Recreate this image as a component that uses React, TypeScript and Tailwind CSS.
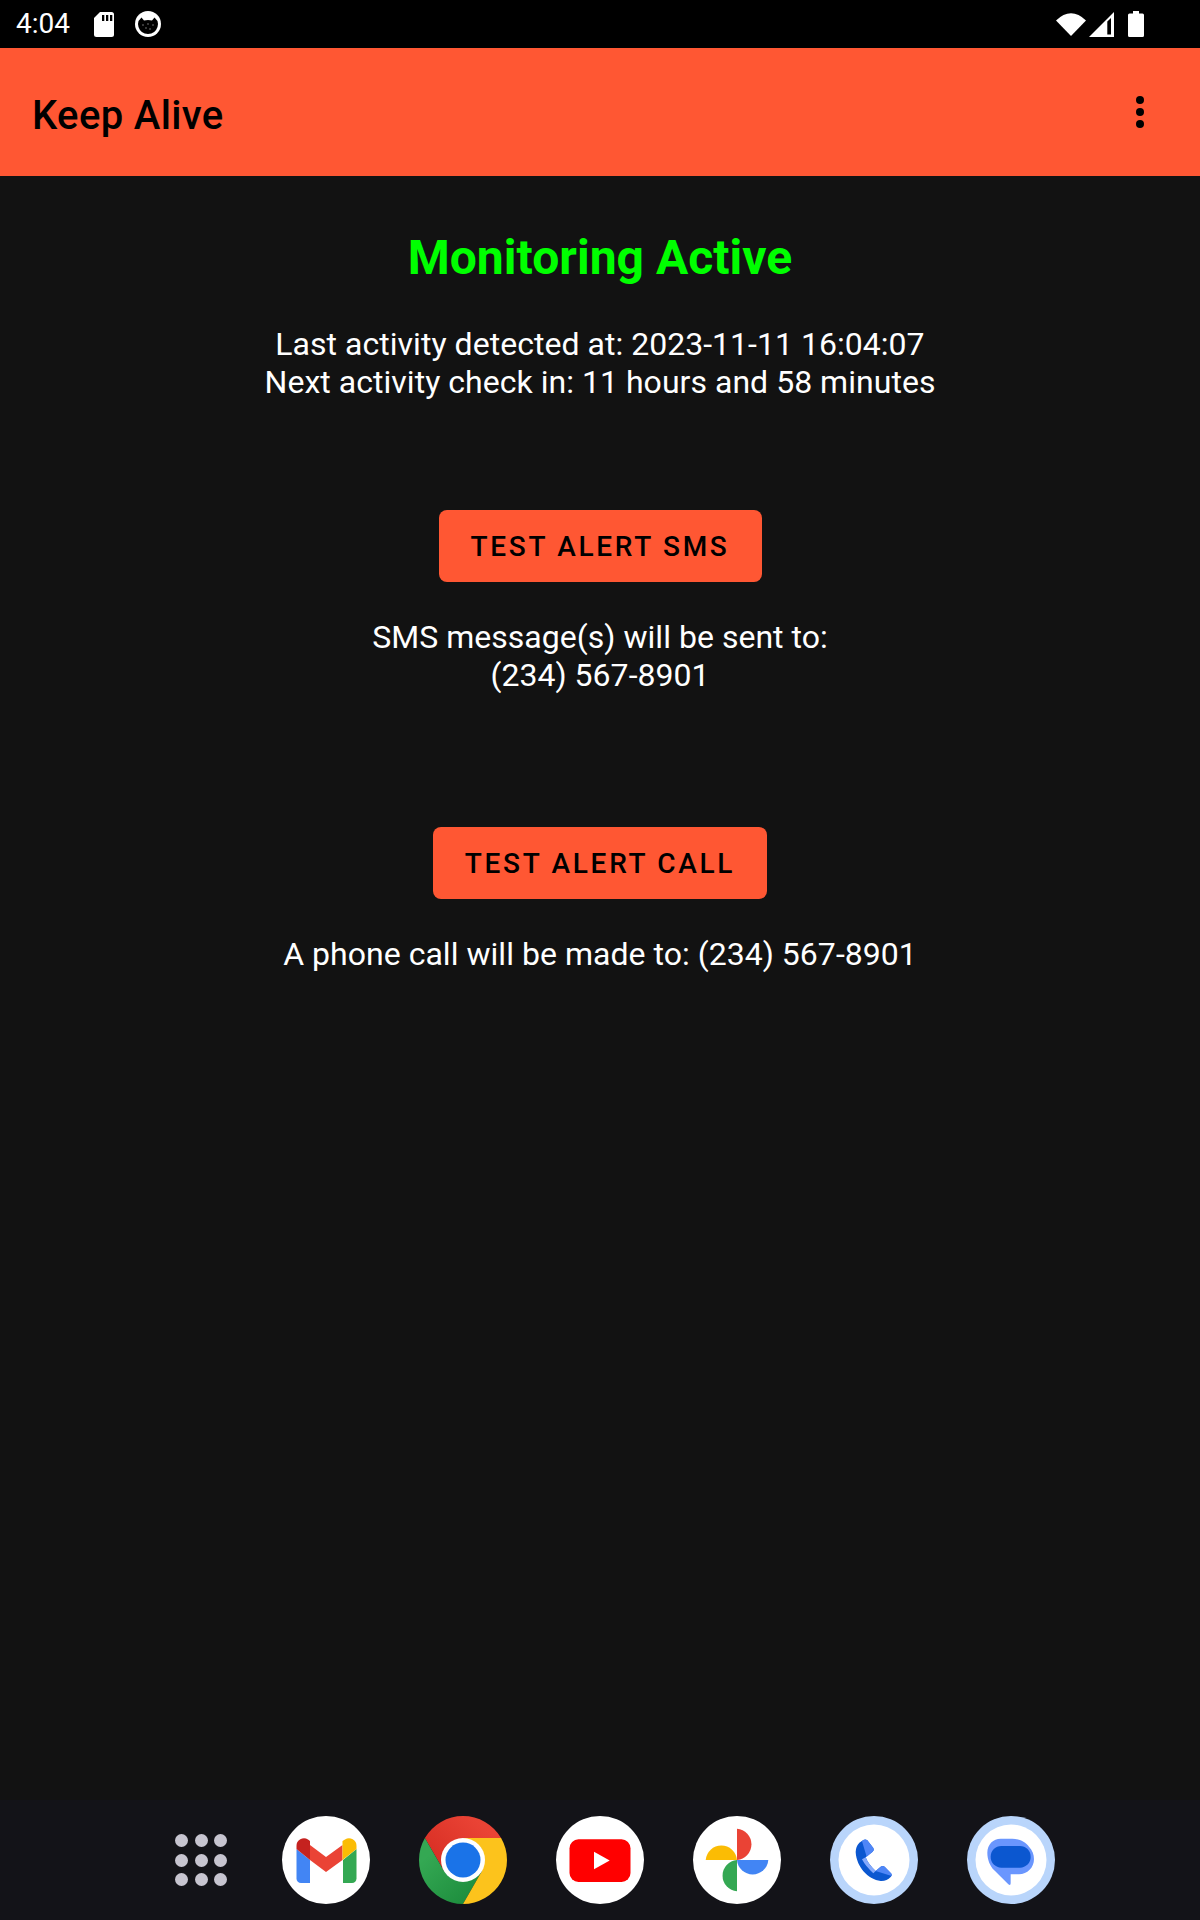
const dots = [0, 1, 2, 3, 4, 5, 6, 7, 8];

function StatusBar() {
  return (
    <div className="h-12 bg-black flex items-center shrink-0 pl-4 pr-[56px] text-white">
      <span className="text-[28px] leading-none w-[78px]">4:04</span>
      <svg width="20" height="25" viewBox="0 0 20 25" className="mr-[21px]">
        <path d="M6 0H17.5A2.5 2.5 0 0 1 20 2.5V22.5A2.5 2.5 0 0 1 17.5 25H2.5A2.5 2.5 0 0 1 0 22.5V6Z" fill="#fff" />
        <rect x="8" y="3" width="2.3" height="6" fill="#000" />
        <rect x="12" y="3" width="2.3" height="6" fill="#000" />
        <rect x="16" y="3" width="2.3" height="6" fill="#000" />
      </svg>
      <svg width="26" height="26" viewBox="0 0 26 26">
        <circle cx="13" cy="13" r="13" fill="#fff" />
        <path d="M3.5 10L6.5 6.5L9 9.5Q13 8.3 17 9.5L19.5 6.5L22.5 10Q23.5 13 22.5 16A10 10 0 0 1 3.5 16Q2.5 13 3.5 10Z" fill="#000" />
        <circle cx="8" cy="14" r="0.7" fill="#999" />
        <circle cx="11" cy="17" r="0.7" fill="#999" />
        <circle cx="18" cy="14" r="0.7" fill="#999" />
        <circle cx="15" cy="18" r="0.7" fill="#999" />
        <circle cx="13" cy="13" r="0.7" fill="#999" />
      </svg>
      <div className="flex-1" />
      <svg width="30" height="24" viewBox="0 0 30 24" className="mr-[3px]">
        <path d="M0 8.5Q15 -6 30 8.5L15 24Z" fill="#fff" />
      </svg>
      <svg width="25" height="25" viewBox="0 0 25 25" className="mr-[14px]">
        <path d="M25 0V25H0Z" fill="#fff" />
        <path d="M18.3 9.5L22 6V22.5H18.3Z" fill="#000" />
      </svg>
      <svg width="16" height="26" viewBox="0 0 16 26">
        <path d="M5 0H11V2.5H14.5A1.5 1.5 0 0 1 16 4V24.5A1.5 1.5 0 0 1 14.5 26H1.5A1.5 1.5 0 0 1 0 24.5V4A1.5 1.5 0 0 1 1.5 2.5H5Z" fill="#fff" />
      </svg>
    </div>
  );
}

function Toolbar() {
  return (
    <div className="h-32 bg-[#ff5733] flex items-center justify-between shrink-0 pl-8 pr-[56px]">
      <span className="mt-[7px] text-[40px] font-medium tracking-[0.35px] text-black leading-none">Keep Alive</span>
      <div className="flex flex-col gap-1">
        <span className="w-2 h-2 rounded-full bg-black" />
        <span className="w-2 h-2 rounded-full bg-black" />
        <span className="w-2 h-2 rounded-full bg-black" />
      </div>
    </div>
  );
}

function Dock() {
  return (
    <div className="h-[120px] bg-[#131318] flex items-center shrink-0 pl-[175px] gap-[49px]">
      <div className="grid grid-cols-[13px_13px_13px] gap-[6.5px] mr-[6px]">
        {dots.map((d) => (
          <span key={d} className="w-[13px] h-[13px] rounded-full bg-[#c7c5d0]" />
        ))}
      </div>
      {/* gmail */}
      <svg width="88" height="88" viewBox="0 0 88 88">
        <circle cx="44" cy="44" r="44" fill="#fff" />
        <path d="M14.5 33V62.5A4.5 4.5 0 0 0 19 67H28V44Z" fill="#4285f4" />
        <path d="M74.5 33V62.5A4.5 4.5 0 0 1 70 67H61V44Z" fill="#34a853" />
        <path d="M28 29L44 41L60.5 29V44L44 56L28 44Z" fill="#ea4335" />
        <path d="M14.5 33V30A7.5 7.5 0 0 1 26 23.5L28 25V44Z" fill="#c5221f" />
        <path d="M74.5 33V30A7.5 7.5 0 0 0 63 23.5L60.5 25V44Z" fill="#fbbc04" />
      </svg>
      {/* chrome */}
      <svg width="88" height="88" viewBox="0 0 88 88">
        <defs>
          <linearGradient id="chromeRed" x1="0" y1="0.6" x2="0.7" y2="0.1">
            <stop offset="0" stopColor="#d93025" />
            <stop offset="1" stopColor="#ea4335" />
          </linearGradient>
          <linearGradient id="chromeGreen" x1="0.7" y1="1" x2="0.1" y2="0.3">
            <stop offset="0" stopColor="#1e8e3e" />
            <stop offset="1" stopColor="#34a853" />
          </linearGradient>
        </defs>
        <path d="M5.9 22A44 44 0 0 1 82.1 22L44 22L25 55Z" fill="url(#chromeRed)" />
        <path d="M5.9 22A44 44 0 0 0 44 88L63 55L44 66L25 55Z" fill="url(#chromeGreen)" />
        <path d="M82.1 22A44 44 0 0 1 44 88L63 55L63 33L44 22Z" fill="#fcc31c" />
        <circle cx="44" cy="44" r="22" fill="#fff" />
        <circle cx="44" cy="44" r="17.5" fill="#1a73e8" />
      </svg>
      {/* youtube */}
      <svg width="88" height="88" viewBox="0 0 88 88">
        <circle cx="44" cy="44" r="44" fill="#fff" />
        <rect x="13.5" y="23.3" width="61" height="42.6" rx="9" fill="#ff0000" />
        <path d="M38 35.7L53.7 44.5L38 53.3Z" fill="#fff" />
      </svg>
      {/* photos */}
      <svg width="88" height="88" viewBox="0 0 88 88">
        <circle cx="44" cy="44" r="44" fill="#fff" />
        <path d="M44 12.7A15.7 15.7 0 0 1 44 44Z" fill="#ea4335" />
        <path d="M12.7 44A15.7 15.7 0 0 1 44 44Z" fill="#fbbc04" />
        <path d="M44 44H75.3A15.7 15.7 0 0 1 44 44Z" fill="#4285f4" />
        <path d="M44 44V75.3A15.7 15.7 0 0 1 44 44Z" fill="#34a853" />
      </svg>
      {/* phone */}
      <svg width="88" height="88" viewBox="0 0 88 88">
        <circle cx="44" cy="44" r="44" fill="#b9d5fb" />
        <circle cx="44" cy="44" r="35.5" fill="#fff" />
        <g transform="translate(10 10) scale(0.3333)">
          <path d="M70 42Q76 38 82 43L100 66Q104 72 98 77L77 94Q85 115 107 135L122 122Q128 118 134 122L153 142Q158 148 152 153Q140 166 122 165C85 160 50 125 47 78Q47 62 58 50Z" fill="#0b57d0" />
          <path d="M70 42Q76 38 82 43L100 66Q104 72 98 77L80 92L66 46Z" fill="#4f86f7" />
          <path d="M77 94Q85 115 107 135L100 142Q76 120 66 100Z" fill="#84a9fc" />
          <path d="M107 135L122 122Q128 118 134 122L153 142Q156 146 155 150Z" fill="#4f86f7" />
        </g>
      </svg>
      {/* messages */}
      <svg width="88" height="88" viewBox="0 0 88 88">
        <circle cx="44" cy="44" r="44" fill="#b9d5fb" />
        <circle cx="44" cy="44" r="35.5" fill="#fff" />
        <g transform="translate(7 10) scale(0.3333)">
          <path d="M80 38H115C135 38 155 48 165 62C175 72 180 85 180 100C180 125 160 145 135 145H110V172Q110 180 103 175L60 132C48 120 40 100 40 80C40 55 58 38 80 38Z" fill="#6a96fe" />
          <rect x="50" y="60" width="120" height="65" rx="32" fill="#0b57d0" />
        </g>
      </svg>
    </div>
  );
}

export default function App() {
  return (
    <div className="w-[1200px] h-[1920px] flex flex-col bg-[#121212] text-white font-['Roboto',sans-serif] overflow-hidden">
      <StatusBar />
      <Toolbar />
      <div className="flex-1 flex flex-col items-center text-center text-[32px] leading-[38px] tracking-[0.03px]">
        <h1 className="mt-[52px] text-[48px] leading-[60px] font-bold text-[#00ff00]">Monitoring Active</h1>
        <p className="mt-[37px]">
          Last activity detected at: 2023-11-11 16:04:07
          <br />
          Next activity check in: 11 hours and 58 minutes
        </p>
        <button className="mt-[109px] pt-[2px] h-[72px] w-[323px] rounded-lg bg-[#ff5733] text-black text-[28px] font-medium tracking-[2.7px]">
          TEST ALERT SMS
        </button>
        <p className="mt-[36px]">
          SMS message(s) will be sent to:
          <br />
          (234) 567-8901
        </p>
        <button className="mt-[133px] pt-[2px] h-[72px] w-[334px] rounded-lg bg-[#ff5733] text-black text-[28px] font-medium tracking-[2.7px]">
          TEST ALERT CALL
        </button>
        <p className="mt-[36px]">A phone call will be made to: (234) 567-8901</p>
      </div>
      <Dock />
    </div>
  );
}
